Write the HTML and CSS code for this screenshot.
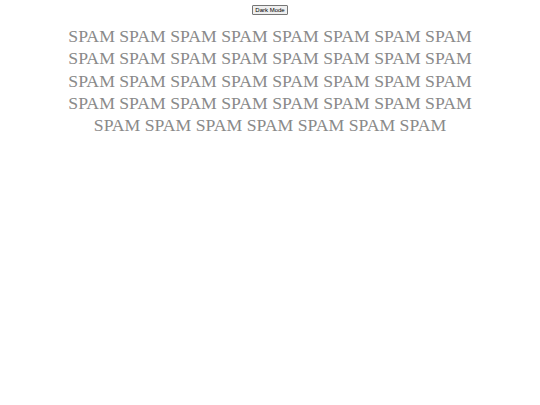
FILE: index.html
```html
<!DOCTYPE html>
<html>
<head>
<meta charset="utf-8">
<link rel="stylesheet" href="styles.css">
</head>
<body>
<div class="page">
  <button class="toggle">Dark Mode</button>
  <p class="spam">SPAM SPAM SPAM SPAM SPAM SPAM SPAM SPAM SPAM SPAM SPAM SPAM SPAM SPAM SPAM SPAM SPAM SPAM SPAM SPAM SPAM SPAM SPAM SPAM SPAM SPAM SPAM SPAM SPAM SPAM SPAM SPAM SPAM SPAM SPAM SPAM SPAM SPAM SPAM</p>
</div>
</body>
</html>
```
FILE: styles.css
```css
html, body {
  margin: 0;
  padding: 0;
  background: #ffffff;
}
.page {
  display: flex;
  flex-direction: column;
  align-items: center;
  padding-top: 5px;
}
.toggle {
  font-family: "Liberation Sans", Arial, sans-serif;
  font-size: 6px;
  line-height: 8px;
  padding: 0 2px;
  margin: 0;
  background: #efefef;
  color: #000;
  border: 1px solid #767676;
  border-radius: 1px;
}
.spam {
  width: 430px;
  margin: 10px 0 0 0;
  font-family: "Liberation Serif", "Times New Roman", serif;
  font-size: 17.7px;
  line-height: 22.3px;
  color: #8a8a8a;
  text-align: center;
}
```
